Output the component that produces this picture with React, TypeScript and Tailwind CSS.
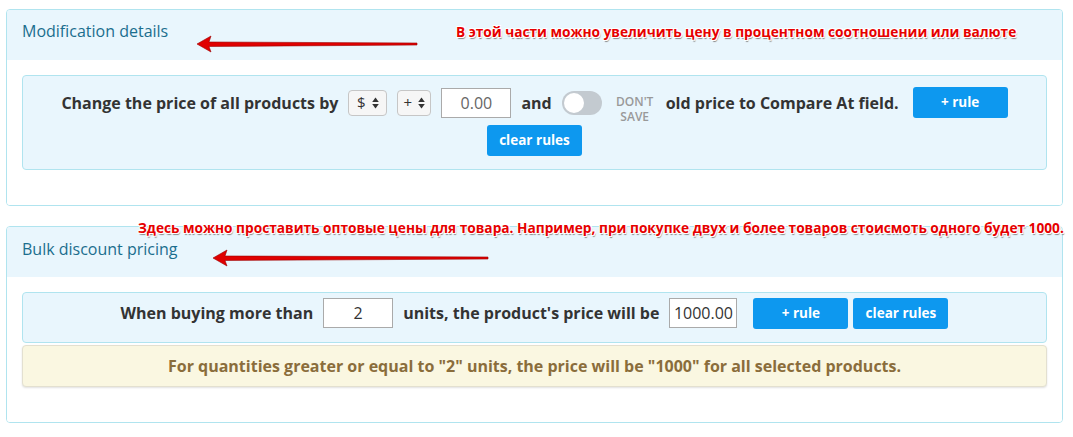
const font = { fontFamily: '"Open Sans", "Liberation Sans", sans-serif' }

// маленькие стрелки вверх/вниз как у нативного select
const UpDown = () => (
  <svg width="7" height="12" viewBox="0 0 7 12" className="ml-1.5">
    <path d="M3.5 0.5 L6.8 5 L0.2 5 Z" fill="#333" />
    <path d="M3.5 11.5 L6.8 7 L0.2 7 Z" fill="#333" />
  </svg>
)

// красная стрелка-аннотация
const RedArrow = ({ length }: { length: number }) => (
  <svg width={length} height="20" viewBox={`0 0 ${length} 20`}>
    <path
      d={`M1 10 L15 2 L13 8 L${length - 1} 9 L${length - 1} 11 L13 12.5 L15 18 Z`}
      fill="#e00000"
      stroke="#9a0000"
      strokeWidth="0.6"
      strokeLinejoin="round"
    />
  </svg>
)

const Note = ({ children }: { children: React.ReactNode }) => (
  <span
    className="whitespace-nowrap text-[13.7px] font-bold text-[#e60000]"
    style={{
      textShadow:
        '1px 1px 0 #fff, -1px -1px 0 #fff, 1px -1px 0 #fff, -1px 1px 0 #fff, 1px 2px 1px #888',
    }}
  >
    {children}
  </span>
)

const BlueButton = ({ children, className = '' }: { children: React.ReactNode; className?: string }) => (
  <button
    className={`h-[31px] w-[95px] shrink-0 rounded-[3px] bg-[#0d98ef] text-[13.5px] font-bold text-white ${className}`}
  >
    {children}
  </button>
)

export default function App() {
  return (
    <div className="relative min-h-[437px] bg-white px-[6px] pt-[9px] text-[#333]" style={font}>
      {/* Modification details */}
      <section className="w-[1057px] overflow-hidden rounded-[4px] border border-[#b0e4ef]">
        <div className="h-[50px] bg-[#e9f6fd] px-[15px] pt-[10px]">
          <h3 className="text-[16px] leading-[22px] text-[#1b6e8e]">Modification details</h3>
        </div>
        <div className="bg-white px-[15px] pb-[35px] pt-[15px]">
          <div className="flex h-[95px] flex-col items-center gap-[7px] rounded-[4px] border border-[#b0e4ef] bg-[#e9f6fd] pt-[11px]">
            <div className="flex h-[31px] items-center whitespace-nowrap text-[16px] font-bold">
              <span className="mr-[10px]">Change the price of all products by</span>
              <div className="mr-[10px] flex h-[26px] w-[39px] items-center justify-center rounded-[4px] border border-[#c6c6c6] bg-[#f6f6f6] text-[15px] font-normal">
                $<UpDown />
              </div>
              <div className="mr-[10px] flex h-[26px] w-[34px] items-center justify-center rounded-[4px] border border-[#c6c6c6] bg-[#f6f6f6] text-[15px] font-normal">
                +<UpDown />
              </div>
              <input
                readOnly
                value="0.00"
                className="mr-[10px] h-[30px] w-[70px] border border-[#aaa] bg-white text-center text-[16px] font-normal text-[#666] outline-none"
              />
              <span className="mr-[10px]">and</span>
              <div className="mr-[11px] flex h-[24px] w-[40px] items-center rounded-full bg-[#c3cad0] px-[2px]">
                <div className="h-[20px] w-[20px] rounded-full bg-white" />
              </div>
              <div className="mr-[9px] mt-[7px] flex h-[30px] w-[44px] flex-col items-center self-start text-[12px] font-semibold leading-[15px] text-[#999]">
                <span>DON'T</span>
                <span>SAVE</span>
              </div>
              <span className="mr-[14px]">old price to Compare At field.</span>
              <BlueButton>+ rule</BlueButton>
            </div>
            <BlueButton>clear rules</BlueButton>
          </div>
        </div>
      </section>

      {/* Bulk discount pricing */}
      <section className="mt-[20px] w-[1057px] overflow-hidden rounded-[4px] border border-[#b0e4ef]">
        <div className="h-[50px] bg-[#e9f6fd] px-[15px] pt-[11px]">
          <h3 className="text-[16px] leading-[22px] text-[#1b6e8e]">Bulk discount pricing</h3>
        </div>
        <div className="bg-white px-[15px] pb-[35px] pt-[15px]">
          <div className="flex h-[51px] items-start justify-center whitespace-nowrap rounded-[4px] border border-[#b0e4ef] bg-[#e9f6fd] pt-[5px] text-[16px] font-bold">
            <span className="mr-[10px] leading-[31px]">When buying more than</span>
            <input
              readOnly
              value="2"
              className="mr-[10px] h-[30px] w-[70px] border border-[#aaa] bg-white text-center text-[16px] font-normal outline-none"
            />
            <span className="mr-[10px] leading-[31px]">units, the product's price will be</span>
            <input
              readOnly
              value="1000.00"
              className="mr-[16px] h-[30px] w-[68px] border border-[#aaa] bg-white px-0 text-center text-[16px] font-normal outline-none"
            />
            <BlueButton className="mr-[5px]">+ rule</BlueButton>
            <BlueButton>clear rules</BlueButton>
          </div>
          <div className="mt-[2px] flex h-[42px] items-center justify-center rounded-[4px] border border-[#e3e0d0] bg-[#faf7e1] text-[16px] font-bold text-[#8a6d3b] shadow-[0_1px_2px_rgba(0,0,0,0.12)]">
            For quantities greater or equal to "2" units, the price will be "1000" for all selected products.
          </div>
        </div>
      </section>

      {/* Аннотации поверх скриншота */}
      <div className="absolute left-[456px] top-[19px]">
        <Note>В этой части можно увеличить цену в процентном соотношении или валюте</Note>
      </div>
      <div className="absolute left-[196px] top-[34px]">
        <RedArrow length={222} />
      </div>
      <div className="absolute left-[138px] top-[215px]">
        <Note>
          Здесь можно проставить оптовые цены для товара. Например, при покупке двух и более товаров стоисмоть одного будет 1000.
        </Note>
      </div>
      <div className="absolute left-[212px] top-[248px]">
        <RedArrow length={277} />
      </div>
    </div>
  )
}
